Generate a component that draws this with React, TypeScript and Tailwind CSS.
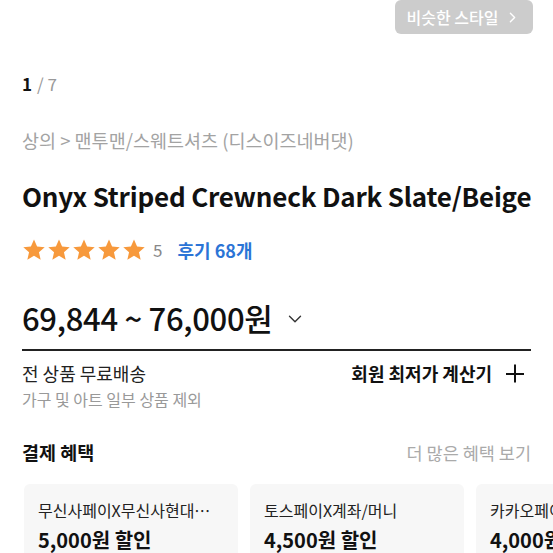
import { ChevronDown, ChevronRight } from 'lucide-react';

const font = { fontFamily: '"Noto Sans CJK KR", "Noto Sans", sans-serif' };

function Star() {
  return (
    <svg width="24" height="24" viewBox="0 0 24 24" className="shrink-0">
      <path
        d="M12 1.5l3.1 7 7.6.7-5.75 5.05 1.7 7.45L12 17.8l-6.65 3.9 1.7-7.45L1.3 9.2l7.6-.7z"
        fill="#f7993c"
      />
    </svg>
  );
}

const benefits = [
  { name: '무신사페이X무신사현대…', amount: '5,000원 할인' },
  { name: '토스페이X계좌/머니', amount: '4,500원 할인' },
  { name: '카카오페이X카카오페이머니', amount: '4,000원 할인' },
];

export default function App() {
  return (
    <div className="h-[553px] w-[553px] overflow-hidden bg-white text-[#111]" style={font}>
      <div className="flex h-[35px] justify-end pr-[20px]">
        <button className="flex h-[34px] w-[138px] items-center justify-center gap-[6px] rounded-[6px] bg-[#cccccc] text-[16px] font-medium text-white">
          비슷한 스타일
          <ChevronRight size={17} strokeWidth={2} />
        </button>
      </div>

      <div className="px-[22px]">
        <div className="mt-[37px] flex h-[24px] items-center text-[17px]">
          <span className="font-bold text-[#111]">1</span>
          <span className="ml-[5px] text-[#999]">/ 7</span>
        </div>

        <div className="mt-[33px] flex h-[24px] items-center whitespace-nowrap text-[18.5px] text-[#a3a3a3]">
          상의 &gt; 맨투맨/스웨트셔츠 (디스이즈네버댓)
        </div>

        <h1 className="mt-[26px] flex h-[32px] items-center whitespace-nowrap text-[26px] font-bold tracking-[-0.2px] text-[#111]">
          Onyx Striped Crewneck Dark Slate/Beige
        </h1>

        <div className="mt-[27px] flex h-[24px] items-center">
          <div className="flex gap-[1px]">
            <Star />
            <Star />
            <Star />
            <Star />
            <Star />
          </div>
          <span className="ml-[7px] text-[17px] text-[#888]">5</span>
          <span className="ml-[15px] text-[18px] font-bold text-[#2b74d6]">후기 68개</span>
        </div>

        <div className="mt-[38px] flex h-[36px] items-center">
          <span className="text-[31px] font-medium tracking-[-0.3px] text-[#111]">69,844 ~ 76,000원</span>
          <ChevronDown size={22} strokeWidth={1.5} className="ml-[11px] mt-[2px] text-[#333]" />
        </div>

        <div className="mt-[13px] h-[2px] bg-[#222]" />

        <div className="mt-[11px] flex h-[22px] items-center justify-between">
          <span className="text-[18px] text-[#222]">전 상품 무료배송</span>
          <div className="mr-[5px] flex items-center">
            <span className="text-[18px] font-bold text-[#111]">회원 최저가 계산기</span>
            <svg width="22" height="22" viewBox="0 0 22 22" className="ml-[12px]">
              <path d="M11 2.5v18M2 12h18" stroke="#111" strokeWidth="2" />
            </svg>
          </div>
        </div>
        <div className="mt-[5px] flex h-[20px] items-center text-[16px] text-[#999]">
          가구 및 아트 일부 상품 제외
        </div>

        <div className="mt-[32px] flex h-[24px] items-center justify-between">
          <span className="text-[18.5px] font-bold text-[#111]">결제 혜택</span>
          <span className="text-[17.5px] text-[#aaa]">더 많은 혜택 보기</span>
        </div>
      </div>

      <div className="mt-[19px] flex gap-[12px] overflow-hidden pl-[24px]">
        {benefits.map((b) => (
          <div key={b.name} className="h-[90px] w-[214px] shrink-0 rounded-[6px] bg-[#f7f7f7] px-[14px] pt-[14px]">
            <div className="truncate text-[16px] text-[#222]">{b.name}</div>
            <div className="mt-[3px] whitespace-nowrap text-[20px] font-bold text-[#111]">{b.amount}</div>
          </div>
        ))}
      </div>
    </div>
  );
}
